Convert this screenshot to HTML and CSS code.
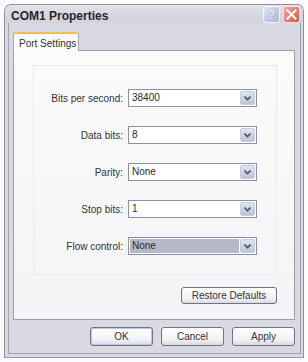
FILE: index.html
```html
<!DOCTYPE html>
<html>
<head>
<meta charset="utf-8">
<link rel="stylesheet" href="styles.css">
</head>
<body>
<div class="window">
  <div class="titlebar">
    <span class="title">COM1 Properties</span>
    <span class="tbtn help">?</span>
    <span class="tbtn close">
      <svg width="11" height="11" viewBox="0 0 11 11"><path d="M1.5 1.5L9.5 9.5M9.5 1.5L1.5 9.5" stroke="#fff" stroke-width="2" stroke-linecap="square"/></svg>
    </span>
  </div>
  <div class="client">
    <div class="tabs"><span class="tab">Port Settings</span></div>
    <div class="panel">
      <div class="group">
        <span class="label">Bits per second:</span>
        <div class="combo"><span class="val">38400</span><span class="drop"><svg width="7" height="5" viewBox="0 0 7 5"><path d="M0.5 0.5L3.5 3.5L6.5 0.5" fill="none" stroke="#4d5364" stroke-width="1.6"/></svg></span></div>
        <span class="label">Data bits:</span>
        <div class="combo"><span class="val">8</span><span class="drop"><svg width="7" height="5" viewBox="0 0 7 5"><path d="M0.5 0.5L3.5 3.5L6.5 0.5" fill="none" stroke="#4d5364" stroke-width="1.6"/></svg></span></div>
        <span class="label">Parity:</span>
        <div class="combo"><span class="val">None</span><span class="drop"><svg width="7" height="5" viewBox="0 0 7 5"><path d="M0.5 0.5L3.5 3.5L6.5 0.5" fill="none" stroke="#4d5364" stroke-width="1.6"/></svg></span></div>
        <span class="label">Stop bits:</span>
        <div class="combo"><span class="val">1</span><span class="drop"><svg width="7" height="5" viewBox="0 0 7 5"><path d="M0.5 0.5L3.5 3.5L6.5 0.5" fill="none" stroke="#4d5364" stroke-width="1.6"/></svg></span></div>
        <span class="label">Flow control:</span>
        <div class="combo"><span class="val sel">None</span><span class="drop"><svg width="7" height="5" viewBox="0 0 7 5"><path d="M0.5 0.5L3.5 3.5L6.5 0.5" fill="none" stroke="#4d5364" stroke-width="1.6"/></svg></span></div>
      </div>
      <div class="restore-row"><span class="btn restore">Restore Defaults</span></div>
    </div>
    <div class="actions">
      <span class="btn default">OK</span>
      <span class="btn">Cancel</span>
      <span class="btn">Apply</span>
    </div>
  </div>
</div>
</body>
</html>
```
FILE: styles.css
```css
html, body {
  margin: 0;
  padding: 0;
  background: #fbfbfd;
}
body {
  font-family: "Liberation Sans", Arial, sans-serif;
  font-size: 10px;
  color: #333;
}
.window {
  margin: 4px 0 0 4px;
  width: 300px;
  height: 354px;
  box-sizing: border-box;
  border: 1px solid #8f909c;
  border-bottom-color: #9a9ba6;
  border-radius: 7px 7px 0 0;
  background: #d9dae1;
  display: flex;
  flex-direction: column;
}
.titlebar {
  height: 23px;
  display: flex;
  align-items: center;
  gap: 3px;
  padding: 1px 3px 0 6px;
  box-sizing: border-box;
  border-radius: 6px 6px 0 0;
  background: linear-gradient(#e3e4ea, #d5d6de 60%, #d2d3da);
}
.title {
  flex: 1;
  font-weight: bold;
  font-size: 12px;
  color: #26262c;
  padding-top: 2px;
}
.tbtn {
  width: 17px;
  height: 17px;
  box-sizing: border-box;
  border-radius: 3px;
  display: flex;
  align-items: center;
  justify-content: center;
}
.help {
  background: linear-gradient(135deg, #dfe6f3, #a8b6d3);
  border: 1px solid #f4f6fb;
  color: #eef2fa;
  font-weight: bold;
  font-size: 12px;
  text-shadow: 0 0 1px #6e7fa3;
}
.close {
  background: linear-gradient(135deg, #f0a8a0, #d6564a);
  border: 1px solid #f6dcd8;
}
.client {
  flex: 1;
  margin: 0 2px 3px 3px;
  border-left: 1px solid #a4a5b0;
  border-right: 1px solid #9fa0ab;
  border-bottom: 1px solid #a4a5b0;
  padding: 9px 5px 7px 4px;
  display: flex;
  flex-direction: column;
}
.tabs {
  display: flex;
  height: 18px;
}
.tab {
  box-sizing: border-box;
  width: 66px;
  height: 19px;
  padding: 4px 0 0 5px;
  background: #fbfbfc;
  border: 1px solid #a7a9b4;
  border-bottom: none;
  border-top: 2px solid #f0c050;
  border-radius: 3px 3px 0 0;
  font-size: 10px;
  color: #333;
  position: relative;
  z-index: 1;
}
.panel {
  height: 270px;
  box-sizing: border-box;
  border: 1px solid #9c9ea9;
  background: linear-gradient(#fbfbfc, #f4f4f6);
  padding: 14px 17px 0 19px;
  display: flex;
  flex-direction: column;
}
.group {
  height: 210px;
  box-sizing: border-box;
  border: 1px solid #eaeaee;
  display: grid;
  grid-template-columns: 89px 129px;
  grid-auto-rows: 18px;
  row-gap: 19px;
  column-gap: 5px;
  align-items: center;
  padding-top: 23px;
}
.label {
  text-align: right;
  color: #333;
}
.combo {
  box-sizing: border-box;
  height: 18px;
  border: 1px solid #8a90a8;
  background: #fff;
  display: flex;
  padding: 1px;
}
.val {
  flex: 1;
  padding-left: 2px;
  line-height: 14px;
  color: #2a2a2a;
}
.val.sel {
  background: #b5b8c6;
  margin-right: 1px;
}
.drop {
  width: 15px;
  height: 14px;
  box-sizing: border-box;
  border: 1px solid #c6cde0;
  border-radius: 2px;
  background: linear-gradient(#dfe4ef, #bcc4d8);
  display: flex;
  align-items: center;
  justify-content: center;
}
.restore-row {
  display: flex;
  justify-content: flex-end;
  margin-top: 12px;
}
.btn {
  box-sizing: border-box;
  height: 17px;
  border: 1px solid #6f7383;
  border-radius: 3px;
  background: linear-gradient(#ffffff, #f2f2f5 70%, #d8d9e0);
  display: flex;
  align-items: center;
  justify-content: center;
  font-size: 10px;
  color: #333;
}
.restore {
  width: 96px;
}
.actions {
  display: flex;
  justify-content: flex-end;
  gap: 8px;
  margin-top: 7px;
}
.actions .btn {
  width: 63px;
  height: 19px;
}
.btn.default {
  box-shadow: inset 0 0 0 1px #b8c8e8;
}
```
